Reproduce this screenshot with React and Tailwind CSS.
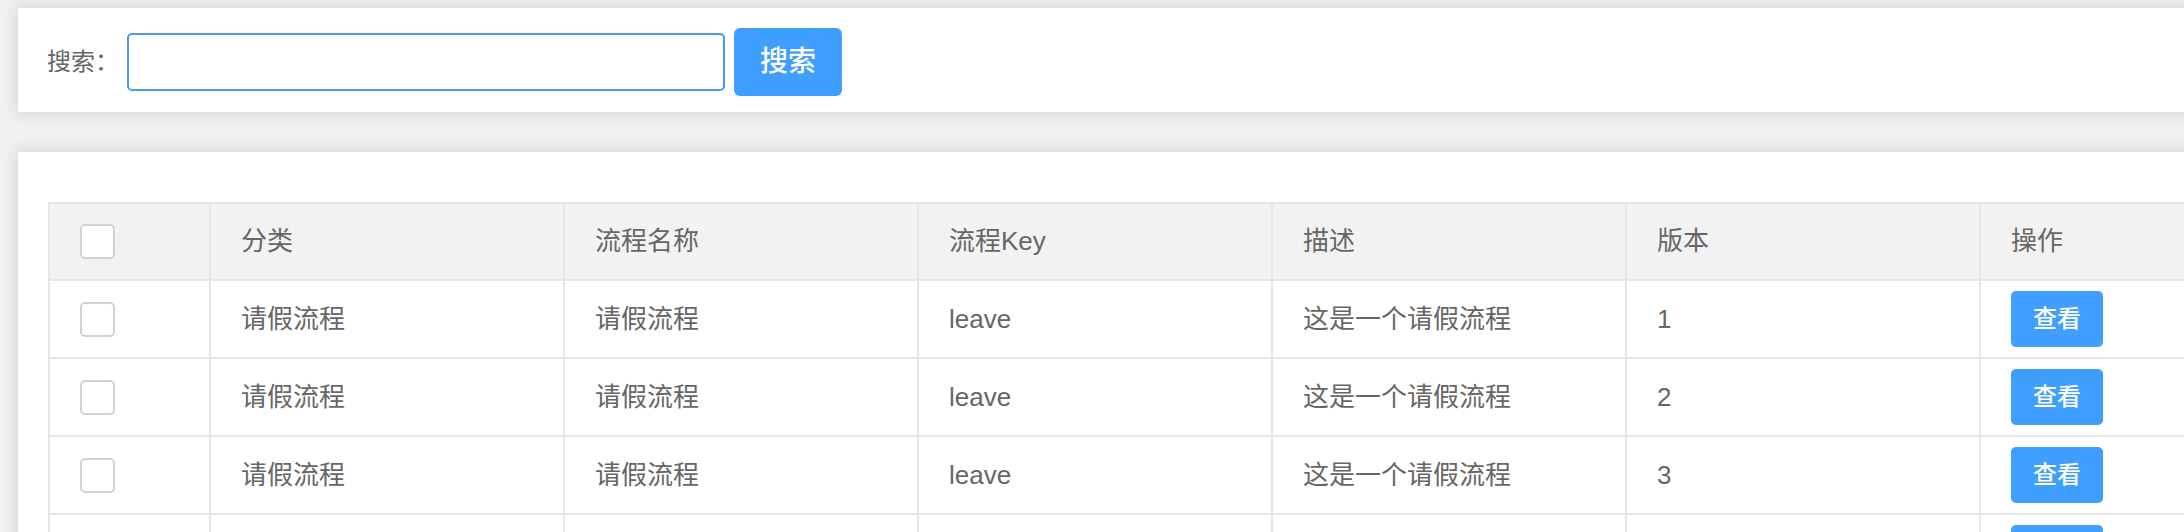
import React from "react";

const rows = [
  { category: "请假流程", name: "请假流程", key: "leave", desc: "这是一个请假流程", version: 1 },
  { category: "请假流程", name: "请假流程", key: "leave", desc: "这是一个请假流程", version: 2 },
  { category: "请假流程", name: "请假流程", key: "leave", desc: "这是一个请假流程", version: 3 },
  { category: "请假流程", name: "请假流程", key: "leave", desc: "这是一个请假流程", version: 4 },
];

const headers = ["分类", "流程名称", "流程Key", "描述", "版本", "操作"];

const Checkbox = () => (
  <div className="w-[35px] h-[35px] rounded-[5px] border-2 border-[#d2d2d2] bg-white"></div>
);

const Cell = ({ children, first }) => (
  <div
    className={`${
      first ? "w-[161px]" : "w-[354px]"
    } shrink-0 h-full flex items-center pl-[30px] border-r-2 border-[#e6e6e6]`}
  >
    {children}
  </div>
);

const App = () => {
  return (
    <div
      className="w-[2184px] h-[532px] overflow-hidden bg-[#f0f0f0] pt-[8px] pl-[18px]"
      style={{ fontFamily: '"Liberation Sans", "Noto Sans CJK SC", sans-serif' }}
    >
      {/* Search bar */}
      <div className="w-[2400px] h-[104px] bg-white shadow-[0_0_16px_rgba(0,0,0,0.14)] pt-[20px] pl-[29px]">
        <div className="flex items-center h-[68px]">
          <label className="text-[24px] text-[#666] mr-[8px]">搜索：</label>
          <input
            type="text"
            className="w-[598px] h-[58px] border-2 border-[#4d9be8] rounded-[5px] outline-none px-3 text-[24px]"
          />
          <button className="ml-[9px] w-[108px] h-[68px] rounded-[6px] bg-[#409eff] text-white text-[28px] font-medium">
            搜索
          </button>
        </div>
      </div>

      {/* Table panel */}
      <div className="w-[2400px] h-[600px] mt-[40px] bg-white shadow-[0_0_16px_rgba(0,0,0,0.14)] pt-[50px] pl-[30px]">
        <div className="border-l-2 border-t-2 border-[#e6e6e6] text-[26px] text-[#666]">
          {/* Header */}
          <div className="flex h-[77px] bg-[#f2f2f2] border-b-2 border-[#e6e6e6]">
            <Cell first>
              <Checkbox />
            </Cell>
            {headers.map((h) => (
              <Cell key={h}>{h}</Cell>
            ))}
          </div>

          {/* Rows */}
          {rows.map((r) => (
            <div key={r.version} className="flex h-[78px] border-b-2 border-[#e6e6e6]">
              <Cell first>
                <Checkbox />
              </Cell>
              <Cell>{r.category}</Cell>
              <Cell>{r.name}</Cell>
              <Cell>{r.key}</Cell>
              <Cell>{r.desc}</Cell>
              <Cell>{r.version}</Cell>
              <Cell>
                <button className="w-[92px] h-[56px] rounded-[5px] bg-[#409eff] text-white text-[24px] font-medium">
                  查看
                </button>
              </Cell>
            </div>
          ))}
        </div>
      </div>
    </div>
  );
};

export default App;
